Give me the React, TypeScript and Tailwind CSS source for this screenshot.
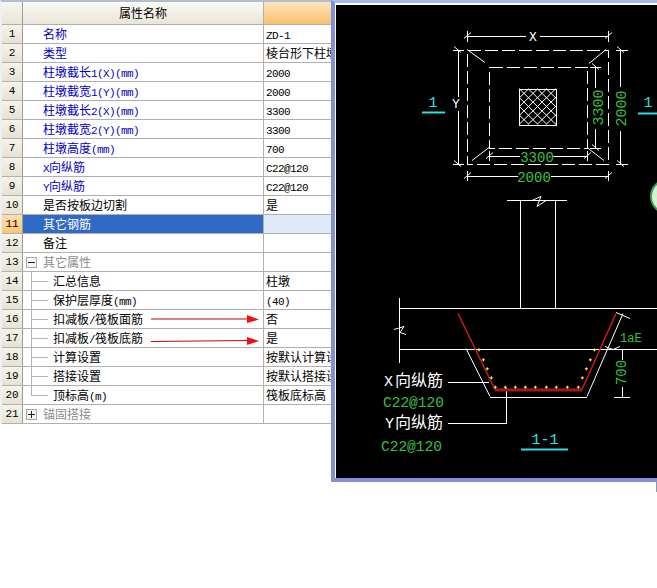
import React from "react";

type Row = {
  name?: string;
  value?: string;
  tone?: "blue" | "black" | "grey";
  tree?: "child" | "last" | "minus" | "plus";
  active?: boolean;
};

const rows: Row[] = [
  { name: "名称", value: "ZD-1", tone: "blue" },
  { name: "类型", value: "棱台形下柱墩", tone: "blue" },
  { name: "柱墩截长1(X)(mm)", value: "2000", tone: "blue" },
  { name: "柱墩截宽1(Y)(mm)", value: "2000", tone: "blue" },
  { name: "柱墩截长2(X)(mm)", value: "3300", tone: "blue" },
  { name: "柱墩截宽2(Y)(mm)", value: "3300", tone: "blue" },
  { name: "柱墩高度(mm)", value: "700", tone: "blue" },
  { name: "X向纵筋", value: "C22@120", tone: "blue" },
  { name: "Y向纵筋", value: "C22@120", tone: "blue" },
  { name: "是否按板边切割", value: "是" },
  { name: "其它钢筋", active: true },
  { name: "备注" },
  { name: "其它属性", tone: "grey", tree: "minus" },
  { name: "汇总信息", value: "柱墩", tree: "child" },
  { name: "保护层厚度(mm)", value: "(40)", tree: "child" },
  { name: "扣减板/筏板面筋", value: "否", tree: "child" },
  { name: "扣减板/筏板底筋", value: "是", tree: "child" },
  { name: "计算设置", value: "按默认计算设置", tree: "child" },
  { name: "搭接设置", value: "按默认搭接设置", tree: "child" },
  { name: "顶标高(m)", value: "筏板底标高", tree: "last" },
  { name: "锚固搭接", tone: "grey", tree: "plus" },
];

// ascii runs are half width next to the chinese glyphs, like the bitmap font in the shot
function Label({ text }: { text: string }) {
  const parts = text.split(/([\x20-\x7e]+)/).filter(Boolean);
  return (
    <span className="whitespace-nowrap">
      {parts.map((p, i) =>
        /^[\x20-\x7e]+$/.test(p) ? (
          <span key={i} className="font-['Liberation_Mono',monospace] text-[11px] tracking-[-0.6px]">
            {p}
          </span>
        ) : (
          <span key={i}>{p}</span>
        )
      )}
    </span>
  );
}

function TreeBox({ open }: { open: boolean }) {
  return (
    <span className="ml-[3px] mr-[6px] flex h-[11px] w-[11px] items-center justify-center border border-[#a8a8a8] bg-[#f4f4f0]">
      <svg width="7" height="7" viewBox="0 0 7 7">
        <path d={open ? "M0 3.5H7" : "M0 3.5H7M3.5 0V7"} stroke="#222" strokeWidth="1" />
      </svg>
    </span>
  );
}

function TreeLine({ last }: { last: boolean }) {
  return (
    <span className={`ml-[8px] mr-[5px] flex w-[17px] border-l border-[#b4b4b4] ${last ? "h-[10px] self-start items-end" : "self-stretch items-center"}`}>
      <span className="block h-px w-full bg-[#b4b4b4]" />
    </span>
  );
}

function TableRow({ row, index }: { row: Row; index: number }) {
  const nameColor = row.active
    ? "bg-[#316ac5] text-white"
    : row.tone === "blue"
      ? "text-[#0000c8]"
      : row.tone === "grey"
        ? "text-[#8c8c8c]"
        : "text-black";
  const hasTree = row.tree === "child" || row.tree === "last";
  return (
    <div className="flex h-[19px] border-b border-[#b0b0b0] text-[12px] leading-[18px]">
      <div
        className={`flex w-[21px] shrink-0 items-center justify-center border-r border-[#9c9c9c] font-['Liberation_Mono',monospace] text-[11px] text-black ${
          row.active ? "bg-gradient-to-b from-[#fde0ae] to-[#fbc474]" : "bg-gradient-to-b from-[#f6f4ea] to-[#e6e3d3]"
        }`}
      >
        {index + 1}
      </div>
      <div className={`flex w-[241px] shrink-0 border-r border-[#b0b0b0] ${nameColor} ${hasTree || row.tree === "minus" || row.tree === "plus" ? "" : "pl-[20px]"}`}>
        {hasTree && <TreeLine last={row.tree === "last"} />}
        {row.tree === "minus" && <span className="flex items-center"><TreeBox open /></span>}
        {row.tree === "plus" && <span className="flex items-center"><TreeBox open={false} /></span>}
        <Label text={row.name ?? ""} />
      </div>
      <div className={`flex-1 pl-[2px] text-black ${row.active ? "bg-[#e0e9f6]" : ""}`}>
        {row.value && <Label text={row.value} />}
      </div>
    </div>
  );
}

const dots = [
  [447, 58], [460, 88], [472, 115], [484, 142], [496, 170], [526, 170], [556, 170], [586, 170], [616, 170],
  [649, 170], [679, 170], [712, 170], [745, 170], [757, 142], [769, 115], [781, 88], [793, 58],
].map(([x, y]) => [x / 3 + 330, y / 3 + 330]);

const hatch = [-36, -27, -18, -9, 0, 9, 18, 27, 36];

function CadDrawing() {
  const mono = "'Liberation Mono', monospace";
  const cjk = "'Noto Sans CJK SC', sans-serif";
  const green = "#38c043";
  const cyan = "#2fe0e0";
  return (
    <svg className="block h-full w-full bg-black" viewBox="336 5 321 472" fontFamily={mono}>
      <defs>
        <clipPath id="hatchClip">
          <rect x="519" y="88" width="37" height="36" />
        </clipPath>
      </defs>

      {/* plan view */}
      <g stroke="#fff" strokeWidth="1" fill="none" shapeRendering="crispEdges">
        <path d="M467.5 49.5H608.5V163.5H467.5Z" strokeDasharray="13 4" />
        <path d="M489.5 66.5H587.5V147.5H489.5Z" strokeDasharray="13 4" />
        <rect x="519.5" y="88.5" width="37" height="36" />
        <path d="M467.5 30V41M608.5 30V41M467 35.5H526M540 35.5H608" />
        <path d="M453 49.5H464M453 163.5H464M458.5 49V96M458.5 110V163" />
        <path d="M616 49.5H628M616 163.5H628M620.5 49V86M620.5 130V163" />
        <path d="M590 66.5H601M590 147.5H601M595.5 66V87M595.5 128V147" />
        <path d="M489.5 150V160M587.5 150V160M489 155.5H520M553 155.5H587" />
        <path d="M467.5 170V180M608.5 170V180M467 175.5H518M551 175.5H608" />
      </g>
      <g stroke="#fff" strokeWidth="1" fill="none">
        <path d="M467 49L485 62M589 63L606 49M472 160L489 147M587 147L604 160" />
        <path d="M464 38L471 32M605 38L612 32M454 46L461 52M454 160L461 166M617 46L624 52M617 160L624 166M592 63L599 69M592 144L599 150M486 158L493 152M584 158L591 152M464 178L471 172M605 178L612 172" />
        <g clipPath="url(#hatchClip)">
          {hatch.map((d) => (
            <path key={d} d={`M${519 + d} 88L${556 + d} 124M${556 - d} 88L${519 - d} 124`} />
          ))}
        </g>
      </g>

      <g fill="#fff" fontSize="13" textAnchor="middle">
        <text x="533" y="40">X</text>
        <text x="456" y="107">Y</text>
      </g>
      <g fill={green} fontSize="14" textAnchor="middle">
        <text x="537" y="161">3300</text>
        <text x="534" y="181">2000</text>
        <text transform="translate(603 107) rotate(-90)" fontSize="15">3300</text>
        <text transform="translate(626 108) rotate(-90)" fontSize="15">2000</text>
      </g>

      <g fill={cyan} fontSize="15" textAnchor="middle">
        <text x="433" y="106">1</text>
        <text x="648" y="106">1</text>
        <text x="545" y="443">1-1</text>
      </g>
      <g fill={cyan}>
        <rect x="422" y="111" width="23" height="2" />
        <rect x="638" y="112" width="19" height="2" />
        <rect x="521" y="448" width="47" height="2" />
      </g>

      <circle cx="668" cy="196" r="17" fill="#d8ecd8" stroke="#3fa04f" strokeWidth="2" />

      {/* section view */}
      <g stroke="#fff" strokeWidth="1" fill="none" shapeRendering="crispEdges">
        <path d="M507 199.5H567M520.5 199V307M555.5 199V307" />
        <path d="M399.5 297V362M399 307.5H657M399 348.5H657" />
        <path d="M448 381.5H489M448 422.5H506.5V387" />
        <path d="M490 396.5H587" />
        <path d="M614 348.5H631M614 396.5H630M622.5 348V359M622.5 386V396" />
      </g>
      <g stroke="#fff" strokeWidth="1" fill="none">
        <path d="M466 348L490 396M587 396L623 313M616 312L630 318" />
        <path d="M532 200L541 196L537 206L546 200" />
        <path d="M394 329L404 326L400 332L406 334" />
        <path d="M605 346L613 349L620 346" />
      </g>
      <path d="M458 313L495 389H582L616 313" fill="none" stroke="#d01818" strokeWidth="1.5" />
      <rect x="495" y="388" width="87" height="3" fill="#a81414" />
      <g fill="#ffff66">
        {dots.map(([x, y], i) => (
          <path key={i} d={`M${x - 1.5} ${y}H${x + 1.5}M${x} ${y - 1.5}V${y + 1.5}`} stroke="#ffff66" strokeWidth="1" />
        ))}
      </g>

      <text x="620" y="341" fill={green} fontSize="12">1aE</text>
      <text transform="translate(626 372) rotate(-90)" fill={green} fontSize="14" textAnchor="middle">700</text>

      <g fontSize="14.5">
        <text x="383" y="406" fill={green}>C22@120</text>
        <text x="381" y="450" fill={green}>C22@120</text>
      </g>
      <g fill="#fff" fontSize="15">
        <text x="384" y="385">X<tspan fontFamily={cjk} fontSize="16" dx="2">向纵筋</tspan></text>
        <text x="385" y="427">Y<tspan fontFamily={cjk} fontSize="16" dx="1">向纵筋</tspan></text>
      </g>
    </svg>
  );
}

export default function App() {
  return (
    <div className="relative h-[588px] w-[657px] overflow-hidden bg-white font-['Noto_Sans_CJK_SC','Liberation_Sans',sans-serif]">
      <div className="w-[332px] border-l-2 border-t-2 border-l-[#eef0f4] border-t-[#b4bdd0]">
        <div className="flex h-[23px] border-b border-[#b0b0b0] text-[12px] leading-[22px] text-black">
          <div className="w-[21px] shrink-0 border-r border-[#9c9c9c] bg-gradient-to-b from-[#f8f7f0] to-[#e8e5d6]" />
          <div className="w-[241px] shrink-0 border-r border-[#b0b0b0] bg-gradient-to-b from-[#fbfaf6] to-[#e9e6d8] text-center">属性名称</div>
          <div className="flex-1 bg-gradient-to-b from-[#fce6bb] to-[#f8c06a]" />
        </div>
        {rows.map((row, index) => (
          <TableRow key={index} row={row} index={index} />
        ))}
      </div>

      {/* red annotation arrows */}
      <svg className="absolute left-[150px] top-[310px]" width="112" height="40" viewBox="150 310 112 40">
        <path d="M151 319H250M151 341.5L250 340.5" stroke="#c00808" strokeWidth="1" fill="none" />
        <path d="M247 315L259 319.5L247 323ZM247 337L259 341L247 345Z" fill="#f01010" />
      </svg>

      {/* floating picture window */}
      <div className="absolute left-[331px] top-0 h-[482px] w-[326px] border-b-[4px] border-l-[4px] border-t-[3px] border-b-[#7f8fdc] border-l-[#7f8fdc] border-t-[#a9b9ec]">
        <div className="h-full w-full border-l border-t border-white pt-px">
          <CadDrawing />
        </div>
      </div>
      <div className="absolute right-0 top-[482px] h-[10px] w-px bg-[#8a9ab0]" />
    </div>
  );
}
